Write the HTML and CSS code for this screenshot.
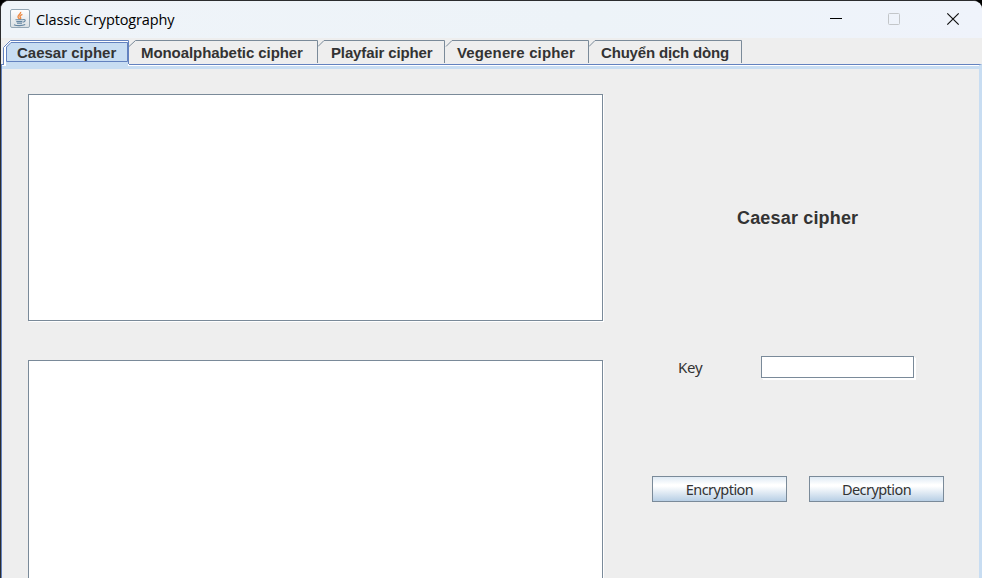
FILE: index.html
```html
<!DOCTYPE html>
<html lang="en">
<head>
<meta charset="utf-8">
<title>Classic Cryptography</title>
<link rel="stylesheet" href="styles.css">
</head>
<body>
<div class="window">
  <header class="titlebar">
    <svg class="app-icon" width="20" height="20" viewBox="0 0 20 20">
      <defs><linearGradient id="g" x1="0" y1="0" x2="0" y2="1"><stop offset="0" stop-color="#fff"/><stop offset="1" stop-color="#d9dfe3"/></linearGradient></defs>
      <rect x=".5" y=".5" width="19" height="18" rx="1.5" fill="url(#g)" stroke="#94a7b5"/>
      <path d="M10.700 2.800C11 5 7.700 6 8 8c.1 1 1.200 1.400 1.600 2.500M12.400 5.400C9.500 6.700 9.600 7.500 10.500 8.500c.5.700.2 1.300-.3 2" fill="none" stroke="#ee8b45" stroke-width="1.400"/>
      <path d="M5.500 10.800h7.500M6.300 12.600h6M7 14.300h5M4 15.700c2.500 1.300 8.500 1.200 11.200-.2M13 10.700c3-.8 3 2-.3 2.600" fill="none" stroke="#6486a2" stroke-width="1.100"/>
    </svg>
    <h1 class="title">Classic Cryptography</h1>
    <div class="controls">
      <svg width="58" height="37" viewBox="0 0 58 37"><path d="M23 17.500h12" stroke="#000"/></svg>
      <svg width="58" height="37" viewBox="0 0 58 37"><rect x="23.500" y="12.500" width="11" height="11" rx="1" fill="none" stroke="#c3c6c9"/></svg>
      <svg width="59" height="37" viewBox="0 0 59 37"><path d="M24.300 12.300l11.400 11.400M35.700 12.300L24.300 23.700" stroke="#111" stroke-width="1.200"/></svg>
    </div>
  </header>
  <nav class="tabs">
    <div class="tab tab-active">
      <svg class="tab-edge" width="126" height="29" viewBox="0 0 126 29">
        <path d="M0 25V7.500L7 0h119v25z" fill="#fff"/>
        <path d="M3 29V7l5-5h117v27z" fill="#c8ddf2"/>
        <path d="M.5 24V7.500L7.500.500H125.500V24" fill="none" stroke="#6382bf"/>
        <path d="M3.500 21.500V7L8 2.500H124.500V21.500z" fill="none" stroke="#6382bf"/>
        <path d="M0 24.500h1" stroke="#6382bf"/><path d="M0 25.500h3" stroke="#fff"/><path d="M0 26h3v3H0z" fill="#c8ddf2"/>
      </svg>
      <span class="label">Caesar cipher</span>
    </div>
    <div class="tab t2"><svg class="tab-edge" width="189" height="24" viewBox="0 0 189 24"><path d="M0 6.500L6.500.500H188.500V23" fill="none" stroke="#7a8a99"/></svg><span class="label">Monoalphabetic cipher</span></div>
    <div class="tab t3"><svg class="tab-edge" width="127" height="24" viewBox="0 0 127 24"><path d="M0 6.500L6 .500H126.500V23" fill="none" stroke="#7a8a99"/></svg><span class="label">Playfair cipher</span></div>
    <div class="tab t4"><svg class="tab-edge" width="144" height="24" viewBox="0 0 144 24"><path d="M1 6.500L7 .500H143.500V23" fill="none" stroke="#7a8a99"/></svg><span class="label">Vegenere cipher</span></div>
    <div class="tab t5"><svg class="tab-edge" width="153" height="24" viewBox="0 0 153 24"><path d="M0 6.500L6 .500H152.500V23" fill="none" stroke="#7a8a99"/></svg><span class="label">Chuyển dịch dòng</span></div>
  </nav>
  <main class="panel">
    <section class="texts">
      <div class="field area"></div>
      <div class="field area"></div>
    </section>
    <section class="side">
      <h2 class="heading">Caesar cipher</h2>
      <div class="key-row"><label class="key">Key</label><div class="field key-input"></div></div>
      <div class="buttons"><button>Encryption</button><button>Decryption</button></div>
    </section>
  </main>
</div>
</body>
</html>
```
FILE: styles.css
```css
* { box-sizing: border-box; }
body { margin: 0; background: #000; color: #333; overflow: hidden; }
.window {
  height: 578px;
  display: flex;
  flex-direction: column;
  border-top: 1px solid #2b2c2e;
  border-left: 1px solid #2b2c2e;
  border-radius: 9px 9px 0 0;
  background: #eee;
  overflow: hidden;
}
.titlebar {
  flex: none;
  height: 37px;
  display: flex;
  align-items: flex-start;
  background: linear-gradient(90deg, #eff4f9, #edf3f8 60%, #eff3fb);
}
.app-icon { margin: 8px 0 0 9px; }
.title {
  margin: 9px 0 0 6px;
  font: 400 14.500px/20px "Open Sans", sans-serif;
  letter-spacing: -.13px;
  color: #000;
  white-space: nowrap;
}
.controls { margin-left: auto; display: flex; }
.tabs {
  flex: none;
  height: 26px;
  display: flex;
  padding: 2px 0 0 2px;
}
.tab { position: relative; height: 24px; flex: none; padding: 1px 0 0 12px; }
.tab-active { width: 126px; z-index: 1; padding-left: 14px; }
.t2 { width: 189px; letter-spacing: -.07px; }
.t3 { width: 127px; padding-left: 13px; letter-spacing: -.13px; }
.t4 { width: 144px; letter-spacing: .14px; }
.t5 { width: 153px; letter-spacing: -.18px; }
.tab-edge { position: absolute; left: 0; top: 0; }
.label {
  position: relative;
  display: block;
  font: bold 15px/24px "Liberation Sans", sans-serif;
  white-space: nowrap;
}
.panel {
  flex: 1;
  display: flex;
  border-top: 1px solid #6382bf;
  border-left: 1px solid #6382bf;
  border-right: 3px solid #c8ddf2;
  box-shadow: inset 0 1px #fff, inset 0 4px #c8ddf2;
  padding: 29px 0 0 26px;
}
.field { background: #fff; border: 1px solid #7a8a99; box-shadow: 1px 1px #fff; }
.texts { flex: none; width: 575px; display: flex; flex-direction: column; gap: 39px; }
.area { height: 227px; flex: none; }
.side { flex: 1; }
.heading {
  margin: 112px 0 0 134px;
  font: bold 18px/24px "Liberation Sans", sans-serif;
  letter-spacing: .17px;
  white-space: nowrap;
}
.key-row { display: flex; margin: 126px 0 0 75px; align-items: center; height: 22px; }
.key { width: 83px; font: 15px/22px "Noto Sans", sans-serif; letter-spacing: -.2px; }
.key-input { width: 153px; height: 22px; box-shadow: 1px 1px #fff, 2px 2px #fff; }
.buttons { display: flex; gap: 22px; margin: 98px 0 0 49px; }
button {
  width: 135px;
  height: 26px;
  padding: 0;
  border: 1px solid #7a8a99;
  background: linear-gradient(#dfeaf4, #fff 32%, #fff 38%, #b8cfe5);
  color: #333;
  font: 14.500px/24px "Noto Sans", sans-serif;
  letter-spacing: -.55px;
}
```
